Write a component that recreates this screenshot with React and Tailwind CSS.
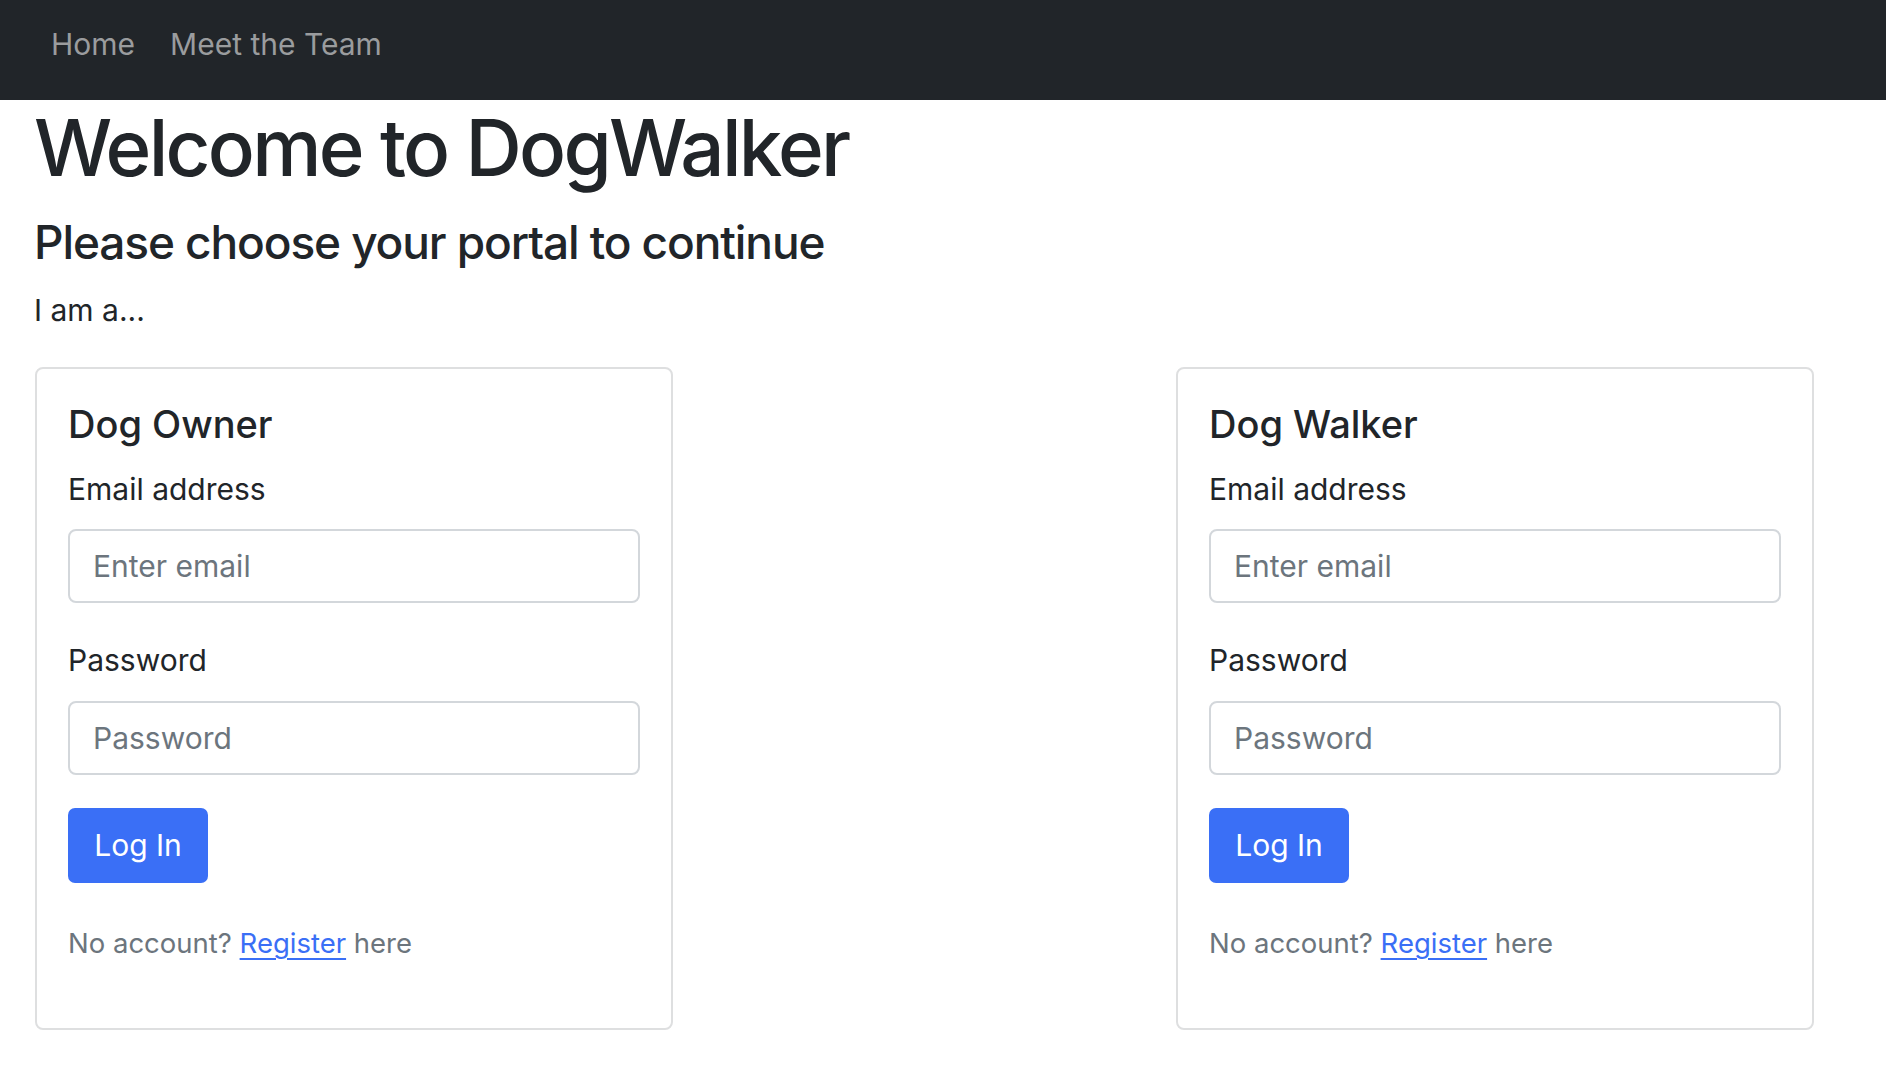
// Landing page: pick owner or walker portal and log in.
function LoginCard({ title }) {
  return (
    <div className="w-[638px] rounded-[8px] border-2 border-[#dedfe0] px-[31px] pb-[62px] pt-[33px]">
      <h5 className="text-[38px] font-medium leading-[45px]">{title}</h5>
      <label className="mt-[20px] block text-[30px] leading-[45px]">Email address</label>
      <input
        type="email"
        placeholder="Enter email"
        className="mt-[17px] block h-[74px] w-full rounded-[8px] border-2 border-[#d3d7db] bg-white px-[23px] text-[30px] outline-none placeholder:text-[#6c757d]"
      />
      <label className="mt-[35px] block text-[30px] leading-[45px]">Password</label>
      <input
        type="password"
        placeholder="Password"
        className="mt-[18px] block h-[74px] w-full rounded-[8px] border-2 border-[#d3d7db] bg-white px-[23px] text-[30px] outline-none placeholder:text-[#6c757d]"
      />
      <button
        type="button"
        className="mt-[33px] flex h-[75px] w-[140px] items-center justify-center rounded-[7px] bg-[#3a6ff6] text-[30px] text-white"
      >
        Log In
      </button>
      <p className="mt-[38px] text-[27.5px] leading-[45px] text-[#6c757d]">
        No account?{' '}
        <a href="#" className="text-[#3a6ff6] underline decoration-2 underline-offset-[5px]">
          Register
        </a>{' '}
        here
      </p>
    </div>
  );
}

export default function App() {
  return (
    <div className="min-h-screen bg-white font-['Inter',sans-serif] text-[#212529]">
      <nav className="flex h-[100px] gap-[35px] bg-[#212529] pl-[51px] pt-[22px] text-[30px] leading-[45px] text-[#9a9c9e]">
        <a href="#">Home</a>
        <a href="#">Meet the Team</a>
      </nav>

      <main className="pl-[34px]">
        <h1 className="mt-[1px] text-[78px] font-medium leading-[94px] tracking-[-0.035em]">Welcome to DogWalker</h1>
        <h3 className="mt-[17px] text-[46px] font-medium leading-[60px] tracking-[-0.024em]">
          Please choose your portal to continue
        </h3>
        <p className="mt-[16px] text-[30px] leading-[45px]">I am a...</p>

        <div className="mt-[34px] flex gap-[503px] pl-[1px]">
          <LoginCard title="Dog Owner" />
          <LoginCard title="Dog Walker" />
        </div>
      </main>
    </div>
  );
}
